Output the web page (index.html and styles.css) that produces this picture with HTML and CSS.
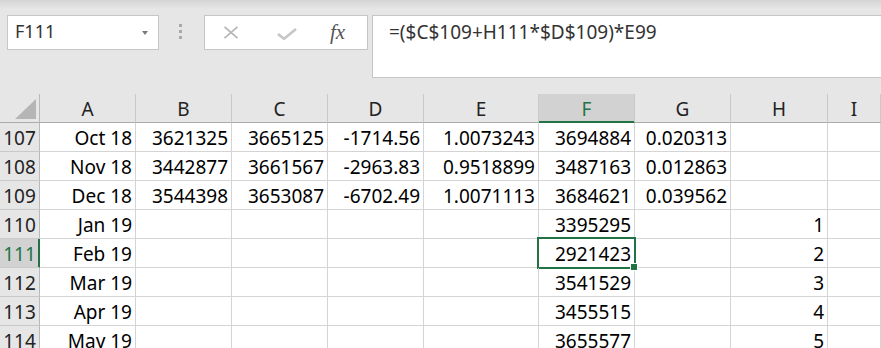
FILE: index.html
```html
<!DOCTYPE html>
<html lang="en">

<head>
    <meta charset="UTF-8" />
    <meta name="viewport" content="width=device-width, initial-scale=1" />
    <title>Forecast - Excel</title>

    <link rel="stylesheet" href="styles.css">
</head>

<body>

    <div class="toolbar">
        <div class="name-box">
            <span>F111</span>
            <span class="drop"></span>
        </div>
        <div class="grip"><i></i><i></i><i></i></div>
        <div class="fx-buttons">
            <svg class="ico-cancel" width="16" height="13" viewBox="0 0 16 13">
                <path d="M1.5 0.8 L14.5 12.2 M14.5 0.8 L1.5 12.2" />
            </svg>
            <svg class="ico-enter" width="20" height="12" viewBox="0 0 20 12">
                <path d="M1 6 L7 10.8 L19 1" />
            </svg>
            <span class="fx">fx</span>
        </div>
        <div class="formula">=($C$109+H111*$D$109)*E99</div>
    </div>

    <div class="sheet">
        <!-- column headers -->
        <div class="corner">
            <svg width="21" height="20" viewBox="0 0 21 20">
                <path d="M21 0 L21 20 L0 20 Z" />
            </svg>
        </div>
        <div class="col-head">A</div>
        <div class="col-head">B</div>
        <div class="col-head">C</div>
        <div class="col-head">D</div>
        <div class="col-head">E</div>
        <div class="col-head sel">F</div>
        <div class="col-head">G</div>
        <div class="col-head">H</div>
        <div class="col-head">I</div>

        <!-- 107 -->
        <div class="row-head">107</div>
        <div class="cell">Oct 18</div>
        <div class="cell">3621325</div>
        <div class="cell">3665125</div>
        <div class="cell">-1714.56</div>
        <div class="cell">1.0073243</div>
        <div class="cell">3694884</div>
        <div class="cell">0.020313</div>
        <div class="cell"></div>
        <div class="cell"></div>

        <!-- 108 -->
        <div class="row-head">108</div>
        <div class="cell">Nov 18</div>
        <div class="cell">3442877</div>
        <div class="cell">3661567</div>
        <div class="cell">-2963.83</div>
        <div class="cell">0.9518899</div>
        <div class="cell">3487163</div>
        <div class="cell">0.012863</div>
        <div class="cell"></div>
        <div class="cell"></div>

        <!-- 109 -->
        <div class="row-head">109</div>
        <div class="cell">Dec 18</div>
        <div class="cell">3544398</div>
        <div class="cell">3653087</div>
        <div class="cell">-6702.49</div>
        <div class="cell">1.0071113</div>
        <div class="cell">3684621</div>
        <div class="cell">0.039562</div>
        <div class="cell"></div>
        <div class="cell"></div>

        <!-- 110 -->
        <div class="row-head">110</div>
        <div class="cell">Jan 19</div>
        <div class="cell"></div>
        <div class="cell"></div>
        <div class="cell"></div>
        <div class="cell"></div>
        <div class="cell">3395295</div>
        <div class="cell"></div>
        <div class="cell">1</div>
        <div class="cell"></div>

        <!-- 111 -->
        <div class="row-head sel">111</div>
        <div class="cell">Feb 19</div>
        <div class="cell"></div>
        <div class="cell"></div>
        <div class="cell"></div>
        <div class="cell"></div>
        <div class="cell active">2921423</div>
        <div class="cell"></div>
        <div class="cell">2</div>
        <div class="cell"></div>

        <!-- 112 -->
        <div class="row-head">112</div>
        <div class="cell">Mar 19</div>
        <div class="cell"></div>
        <div class="cell"></div>
        <div class="cell"></div>
        <div class="cell"></div>
        <div class="cell">3541529</div>
        <div class="cell"></div>
        <div class="cell">3</div>
        <div class="cell"></div>

        <!-- 113 -->
        <div class="row-head">113</div>
        <div class="cell">Apr 19</div>
        <div class="cell"></div>
        <div class="cell"></div>
        <div class="cell"></div>
        <div class="cell"></div>
        <div class="cell">3455515</div>
        <div class="cell"></div>
        <div class="cell">4</div>
        <div class="cell"></div>

        <!-- 114 -->
        <div class="row-head">114</div>
        <div class="cell">May 19</div>
        <div class="cell"></div>
        <div class="cell"></div>
        <div class="cell"></div>
        <div class="cell"></div>
        <div class="cell">3655577</div>
        <div class="cell"></div>
        <div class="cell">5</div>
        <div class="cell"></div>
    </div>

</body>

</html>
```

FILE: styles.css
```css
html,
body {
    margin: 0;
    padding: 0;
    height: 100%;
    overflow: hidden;
    background-color: #e6e6e6;
    font-family: "Noto Sans", "Open Sans", sans-serif;
    color: #000;
}

* {
    box-sizing: border-box;
}

/* formula bar row */

.toolbar {
    display: flex;
    align-items: flex-start;
    height: 94px;
    padding: 15px 0 0 7px;
    background: linear-gradient(#d5d5d5 0, #e6e6e6 9px);
}

.name-box {
    display: flex;
    align-items: flex-start;
    justify-content: space-between;
    width: 152px;
    height: 35px;
    padding: 3px 10px 0 7px;
    background: #fff;
    border: 1px solid #c6c6c6;
    font-size: 18px;
    line-height: 25px;
    color: #333;
}

.name-box .drop {
    margin-top: 12px;
    border-left: 3.5px solid transparent;
    border-right: 3.5px solid transparent;
    border-top: 4px solid #7a7a7a;
}

.grip {
    display: flex;
    flex-direction: column;
    gap: 3px;
    margin: 9px 0 0 20px;
}

.grip i {
    display: block;
    width: 3px;
    height: 3px;
    background: #a9a9a9;
}

.fx-buttons {
    display: flex;
    align-items: center;
    width: 164px;
    height: 35px;
    margin-left: 22px;
    padding-left: 18px;
    background: #fff;
    border: 1px solid #c6c6c6;
}

.ico-cancel path {
    fill: none;
    stroke: #b4b4b4;
    stroke-width: 1.6;
}

.ico-enter {
    margin: 3px 0 0 38px;
}

.ico-enter path {
    fill: none;
    stroke: #c6c6c6;
    stroke-width: 2.6;
}

.fx {
    margin-left: 33px;
    font-family: "Liberation Serif", serif;
    font-style: italic;
    font-size: 21px;
    line-height: 25px;
    color: #555;
}

.formula {
    flex: 1;
    height: 63px;
    margin: 0 -2px 0 4px;
    padding: 4px 16px 0;
    background: #fff;
    border: 1px solid #c6c6c6;
    font-size: 19px;
    line-height: 25px;
    color: #333;
}

/* worksheet grid */

.sheet {
    display: grid;
    grid-template-columns: 40px 96px 96px 96px 96px 115px 96px 96px 97px 1fr;
    grid-auto-rows: 29px;
    background: #fff;
    font-size: 19px;
    line-height: 25px;
}

.corner,
.col-head,
.row-head {
    background: #e6e6e6;
    color: #222;
    text-align: center;
    padding-top: 3px;
}

.corner {
    display: flex;
    align-items: flex-end;
    justify-content: flex-end;
    padding: 0 3px 3px 0;
    border-right: 1px solid #b9b9b9;
    border-bottom: 1px solid #ababab;
}

.corner path {
    fill: #b5b5b5;
}

.col-head {
    border-right: 1px solid #c9c9c9;
    border-bottom: 1px solid #ababab;
}

.row-head {
    border-right: 1px solid #b9b9b9;
    border-bottom: 1px solid #c9c9c9;
}

.col-head.sel,
.row-head.sel {
    background: #d2d2d2;
    color: #217346;
}

.col-head.sel {
    border-bottom-color: #217346;
    box-shadow: inset 0 -1px 0 #217346;
}

.row-head.sel {
    border-right-color: #217346;
    box-shadow: inset -1px 0 0 #217346;
}

.cell {
    position: relative;
    padding: 3px 3px 0 0;
    text-align: right;
    white-space: nowrap;
    border-right: 1px solid #d4d4d4;
    border-bottom: 1px solid #d4d4d4;
}

.cell.active::after {
    content: "";
    position: absolute;
    inset: -2px;
    border: 2px solid #217346;
}

.cell.active::before {
    content: "";
    position: absolute;
    right: -3px;
    bottom: -3px;
    width: 6px;
    height: 6px;
    background: #217346;
    box-shadow: 0 0 0 1px #fff;
    z-index: 2;
}
```
